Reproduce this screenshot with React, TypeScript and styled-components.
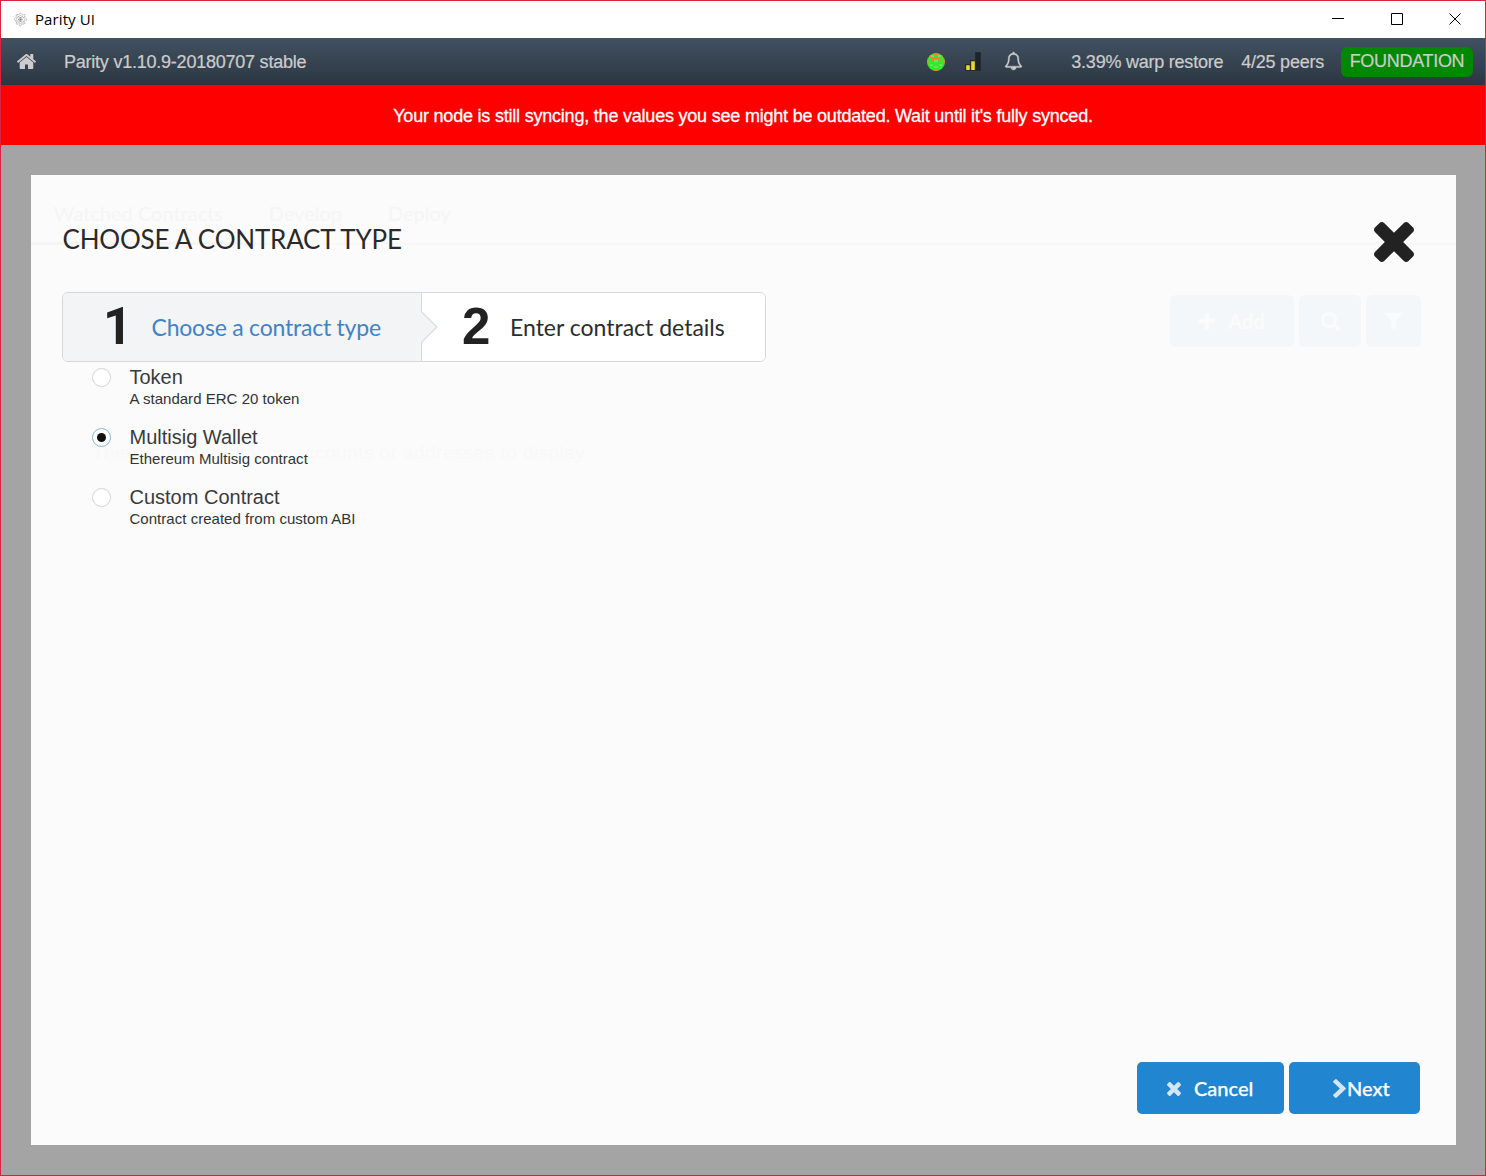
import React from 'react';
import styled, { createGlobalStyle } from 'styled-components';

const SANS = '"Liberation Sans", Arial, sans-serif';
const LATO = 'Lato, "Liberation Sans", sans-serif';

const GlobalStyle = createGlobalStyle`
  *, *::before, *::after { box-sizing: border-box; }
  html, body { margin: 0; padding: 0; }
  body { font-family: ${SANS}; color: #222; overflow: hidden; }
`;

const Glyph = styled.svg<{ $w: number; $h: number }>`
  display: block;
  flex: none;
  width: ${p => p.$w}px;
  height: ${p => p.$h}px;
  fill: currentColor;
`;

const ICONS = {
  home: {
    box: '89 253 1614 1283',
    d: 'M1472 992v480q0 26-19 45t-45 19h-384v-384h-256v384h-384q-26 0-45-19t-19-45v-480q0-1 .5-3t.5-3l575-474 575 474q1 2 1 6zm223-69l-62 74q-8 9-21 11h-3q-13 0-21-7l-692-577-692 577q-12 8-24 7-13-2-21-11l-62-74q-8-10-7-23.5t11-21.5l719-599q32-26 76-26t76 26l244 204v-195q0-14 9-23t23-9h192q14 0 23 9t9 23v408l219 182q10 8 11 21.5t-7 23.5z',
  },
  bell: {
    box: '64 0 1664 1792',
    d: 'M912 1696q0-16-16-16-59 0-101.5-42.5t-42.5-101.5q0-16-16-16t-16 16q0 73 51.5 124.5t124.5 51.5q16 0 16-16zm-666-288h1300q-266-300-266-832 0-51-24-105t-69-103-121.5-80.5-169.5-31.5-169.5 31.5-121.5 80.5-69 103-24 105q0 532-266 832zm1482 0q0 52-38 90t-90 38h-448q0 106-75 181t-181 75-181-75-75-181h-448q-52 0-90-38t-38-90q50-42 91-88t85-119.5 74.5-158.5 50-206 19.5-260q0-152 117-282.5t307-158.5q-8-19-8-39 0-40 28-68t68-28 68 28 28 68q0 20-8 39 190 28 307 158.5t117 282.5q0 139 19.5 260t50 206 74.5 158.5 85 119.5 91 88z',
  },
  close: {
    box: '302 366 1188 1188',
    d: 'M1490 1322q0 40-28 68l-136 136q-28 28-68 28t-68-28l-294-294-294 294q-28 28-68 28t-68-28l-136-136q-28-28-28-68t28-68l294-294-294-294q-28-28-28-68t28-68l136-136q28-28 68-28t68 28l294 294 294-294q28-28 68-28t68 28l136 136q28 28 28 68t-28 68l-294 294 294 294q28 28 28 68z',
  },
  chevron: {
    box: '346 26 1036 1612',
    d: 'M1363 877l-742 742q-19 19-45 19t-45-19l-166-166q-19-19-19-45t19-45l531-531-531-531q-19-19-19-45t19-45l166-166q19-19 45-19t45 19l742 742q19 19 19 45t-19 45z',
  },
  plus: {
    box: '192 128 1408 1408',
    d: 'M1600 736v192q0 40-28 68t-68 28h-416v416q0 40-28 68t-68 28h-192q-40 0-68-28t-28-68v-416h-416q-40 0-68-28t-28-68v-192q0-40 28-68t68-28h416v-416q0-40 28-68t68-28h192q40 0 68 28t28 68v416h416q40 0 68 28t28 68z',
  },
  search: {
    box: '64 128 1664 1664',
    d: 'M1216 832q0-185-131.5-316.5t-316.5-131.5-316.5 131.5-131.5 316.5 131.5 316.5 316.5 131.5 316.5-131.5 131.5-316.5zm512 832q0 52-38 90t-90 38q-54 0-90-38l-343-342q-179 124-399 124-143 0-273.5-55.5t-225-150-150-225-55.5-273.5 55.5-273.5 150-225 225-150 273.5-55.5 273.5 55.5 225 150 150 225 55.5 273.5q0 220-124 399l343 343q37 37 37 90z',
  },
  filter: {
    box: '192 256 1408 1408',
    d: 'M1595 295q17 41-14 70l-493 493v742q0 42-39 59-13 5-25 5-27 0-45-19l-256-256q-19-19-19-45v-486l-493-493q-31-29-14-70 17-39 59-39h1280q42 0 59 39z',
  },
};

function Icon({ name, w, h = w }: { name: keyof typeof ICONS; w: number; h?: number }) {
  return (
    <Glyph $w={w} $h={h} viewBox={ICONS[name].box} preserveAspectRatio="none">
      <path d={ICONS[name].d} />
    </Glyph>
  );
}

const Window = styled.div`
  width: 1486px;
  height: 1176px;
  display: flex;
  flex-direction: column;
  border: 1px solid #d9243c;
  background: #a4a4a4;
`;

/* Title bar */
const TitleBar = styled.div`
  flex: none;
  height: 37px;
  display: flex;
  align-items: center;
  padding: 0 23px 1px 12px;
  background: #fff;
`;
const WindowTitle = styled.span`
  flex: 1;
  margin-left: 7px;
  font: 15px/20px "Open Sans", "Noto Sans", sans-serif;
  letter-spacing: 0.1px;
  color: #000;
`;
const Controls = styled.div`
  display: flex;
  align-items: center;
  gap: 46px;
`;

/* Status header */
const Header = styled.header`
  flex: none;
  height: 47px;
  display: flex;
  align-items: center;
  padding: 0 12px 0 16px;
  background: linear-gradient(#415161, #2c3641);
  color: #ccc;
  font-size: 18px;
  -webkit-text-stroke: 0.2px currentColor;
`;
const HeaderText = styled.span<{ $left: number }>`
  margin-left: ${p => p.$left}px;
  padding-top: 2px;
  letter-spacing: -0.23px;
  white-space: nowrap;
`;
const HeaderIcons = styled.div`
  display: flex;
  align-items: center;
  margin-left: auto;
`;
const SignalSlot = styled.span`
  margin: 0 22px 0 20px;
  display: flex;
`;
const BellSlot = styled.span`
  margin-top: -2px;
  svg { stroke: currentColor; stroke-width: 40; overflow: visible; }
`;
const ChainBadge = styled.span`
  width: 132px;
  height: 30px;
  margin: 0 0 0 17px;
  border-radius: 6px;
  background: #008800;
  text-align: center;
  line-height: 29px;
  letter-spacing: -0.3px;
`;

const Warning = styled.div`
  flex: none;
  height: 60px;
  display: flex;
  align-items: center;
  justify-content: center;
  padding-top: 2px;
  background: #f00;
  color: #fff;
  font-size: 18px;
  letter-spacing: -0.21px;
  -webkit-text-stroke: 0.3px currentColor;
`;

/* Modal */
const Stage = styled.main`
  flex: 1;
  display: grid;
  padding: 30px 29px 30px 30px;
`;
const Modal = styled.section`
  display: grid;
  grid-template: 100% / 100%;
  background: #fbfbfb;
`;
const Underlay = styled.div`
  grid-area: 1 / 1;
  display: flex;
  flex-direction: column;
  color: #f5f5f5;
`;
const Tabs = styled.nav`
  height: 70px;
  display: flex;
  border-bottom: 2px solid #f8f8f8;
  font: 20px/26px ${LATO};
`;
const Tab = styled.span<{ $active?: boolean }>`
  height: 70px;
  padding: 25px 23px 0 22.8px;
  border-bottom: ${p => (p.$active ? '3px solid #f5f5f5' : 'none')};
`;
const Tools = styled.div`
  display: flex;
  justify-content: flex-end;
  gap: 5px;
  padding: 50px 35px 0 0;
`;
const FaintButton = styled.div<{ $w: number }>`
  width: ${p => p.$w}px;
  height: 52px;
  display: flex;
  align-items: center;
  justify-content: center;
  gap: 13px;
  border-radius: 6px;
  background: #f3f7fa;
  color: #fbfbfb;
  font: bold 20px ${LATO};
`;
const EmptyNote = styled.p`
  margin: 94px 0 0 61px;
  font-size: 19px;
  line-height: 24px;
  letter-spacing: 0.44px;
  color: #f8f8f8;
`;

const Content = styled.div`
  grid-area: 1 / 1;
  display: flex;
  flex-direction: column;
  padding: 47px 36px 31px 31px;
`;
const ModalHead = styled.div`
  display: flex;
  justify-content: space-between;
  align-items: flex-start;
  height: 70px;
  padding-right: 6px;
`;
const Heading = styled.h1`
  margin: 0 0 0 0.5px;
  font: 400 26px/35px ${LATO};
  letter-spacing: -0.2px;
  text-transform: uppercase;
  color: #2a2a2a;
`;

const Steps = styled.div`
  display: flex;
  width: 704px;
  height: 70px;
  border: 1px solid #d6d7d8;
  border-radius: 6px;
  background: #fff;
  overflow: hidden;
`;
const Step = styled.div<{ $active?: boolean; $w: number; $pad: number }>`
  position: relative;
  width: ${p => p.$w}px;
  display: flex;
  align-items: center;
  padding-left: ${p => p.$pad}px;
  background: ${p => (p.$active ? '#f3f4f5' : '#fff')};
  color: ${p => (p.$active ? '#4183c4' : '#2c2c2c')};
  border-right: ${p => (p.$active ? '1px solid #d6d7d8' : 'none')};
  letter-spacing: ${p => (p.$active ? -0.22 : 0)}px;
  font: 23px/28px ${LATO};
`;
const StepNumber = styled.span<{ $face: string; $gap: number }>`
  width: ${p => p.$gap}px;
  color: #222;
  font: bold 51px/60px ${p => p.$face};
`;
const Arrow = styled.span`
  position: absolute;
  z-index: 1;
  right: -12px;
  top: 23px;
  width: 22px;
  height: 22px;
  background: #f3f4f5;
  border: solid #d6d7d8;
  border-width: 1px 1px 0 0;
  transform: rotate(45deg);
`;

const Options = styled.div`
  flex: 1;
  padding-left: 30px;
`;
const Option = styled.label`
  display: flex;
  height: 60px;
  padding-top: 6px;
`;
const Radio = styled.span<{ $checked?: boolean }>`
  width: 19px;
  height: 19px;
  margin-right: 18.5px;
  display: grid;
  place-items: center;
  border: 1px solid ${p => (p.$checked ? '#85b7d9' : '#d4d4d5')};
  border-radius: 50%;
  background: #fff;
  &::after {
    content: '';
    width: 9px;
    height: 9px;
    border-radius: 50%;
    background: ${p => (p.$checked ? '#111' : 'transparent')};
  }
`;
const OptionText = styled.span`
  display: flex;
  flex-direction: column;
  margin-top: -1px;
`;
const OptionName = styled.span`
  height: 22px;
  font-size: 20px;
  line-height: 20px;
  color: #3a3a3a;
`;
const OptionHint = styled.span`
  font-size: 15px;
  line-height: 20px;
  letter-spacing: 0.03px;
  color: #333;
`;

const Actions = styled.footer`
  display: flex;
  justify-content: flex-end;
  gap: 5px;
`;
const Button = styled.button<{ $w: number; $gap: number; $pad: number }>`
  width: ${p => p.$w}px;
  height: 52px;
  display: flex;
  align-items: center;
  gap: ${p => p.$gap}px;
  padding: 0 0 0 ${p => p.$pad}px;
  border: 0;
  border-radius: 5px;
  background: #2185d0;
  color: #fff;
  font: 500 20px/24px ${LATO};
  -webkit-text-stroke: 0.25px #fff;
  svg { opacity: 0.8; margin-top: 1px; }
`;

const OPTIONS = [
  { name: 'Token', hint: 'A standard ERC 20 token' },
  { name: 'Multisig Wallet', hint: 'Ethereum Multisig contract', checked: true },
  { name: 'Custom Contract', hint: 'Contract created from custom ABI' },
];

function AppMark() {
  return (
    <svg width="15" height="15" viewBox="0 0 15 15" fill="none" stroke="#999" strokeWidth="0.8" strokeDasharray="1.6 .6">
      <path d="M7.5 .8l1.6 2 2.7-.2-.1 2.7 2.3 2.2-2.3 1.8.1 2.7-2.7-.1-1.6 2.3-1.7-2.3-2.6.1.1-2.7L1 7.500l2.300-2.200-.1-2.700 2.600.2z" />
      <path d="M4.500 5l3-1.500L10.500 5l1 2.500-1 2.500-3 1.500-3-1.500-1-2.500z" />
      <path d="M5.500 6h4M5 7.500h5M5.500 9h4M7.500 5v5" stroke="#777" />
    </svg>
  );
}

function Identity() {
  return (
    <svg width="18" height="18" viewBox="0 0 18 18">
      <defs><clipPath id="face"><circle cx="9" cy="9" r="9" /></clipPath></defs>
      <g clipPath="url(#face)">
        <path fill="#30ee26" d="M0 0h18v18H0z" />
        <path fill="#7bdc65" d="M4 2h3v2H4zM11 2h3v2h-3zM7 7h4v2H7zM3 11h2.500v2H3zM12.500 11H15v2h-2.500zM7 13h4v1.500H7z" />
        <path fill="#f58033" d="M6.500 0h5v2h-5zM2 2h2v2H2zM14 2h2v2h-2zM5 4.500h8v2H5zM4.500 6.500h2V9h-2zM11.500 6.500h2V9h-2zM0 7h1.500v3H0zM16.500 7H18v3h-1.500zM6.500 16h5v2h-5z" />
      </g>
    </svg>
  );
}

function Signal() {
  return (
    <svg width="18" height="20" viewBox="0 0 18 20">
      <path fill="#252b31" d="M0 12h5V8h5V0h6v19H0z" />
      <path fill="#ecd92e" d="M1.200 13.200h3.600V18H1.200zM6.200 9.200h3.600V18H6.200z" />
      <path fill="#1c242b" d="M11 1.200h4V18h-4z" />
    </svg>
  );
}

export default function App() {
  return (
    <>
      <GlobalStyle />
      <Window>
        <TitleBar>
          <AppMark />
          <WindowTitle>Parity UI</WindowTitle>
          <Controls>
            <svg width="13" height="13" stroke="#000"><path d="M1 5.5h12" /></svg>
            <svg width="13" height="13" fill="none" stroke="#000"><path d="M1.500 .5h11v11h-11z" /></svg>
            <svg width="13" height="13" stroke="#000"><path d="M.5 .5l11 11M11.500 .5l-11 11" /></svg>
          </Controls>
        </TitleBar>
        <Header>
          <Icon name="home" w={19} h={15} />
          <HeaderText $left={28}>Parity v1.10.9-20180707 stable</HeaderText>
          <HeaderIcons>
            <Identity />
            <SignalSlot><Signal /></SignalSlot>
            <BellSlot><Icon name="bell" w={17} h={18} /></BellSlot>
          </HeaderIcons>
          <HeaderText $left={49}>3.39% warp restore</HeaderText>
          <HeaderText $left={18}>4/25 peers</HeaderText>
          <ChainBadge>FOUNDATION</ChainBadge>
        </Header>
        <Warning>Your node is still syncing, the values you see might be outdated. Wait until it's fully synced.</Warning>
        <Stage>
          <Modal>
            <Underlay>
              <Tabs><Tab $active>Watched Contracts</Tab><Tab>Develop</Tab><Tab>Deploy</Tab></Tabs>
              <Tools>
                <FaintButton $w={124}><Icon name="plus" w={16} />Add</FaintButton>
                <FaintButton $w={62}><Icon name="search" w={19} /></FaintButton>
                <FaintButton $w={55}><Icon name="filter" w={17} /></FaintButton>
              </Tools>
              <EmptyNote>There are currently no accounts or addresses to display.</EmptyNote>
            </Underlay>
            <Content>
              <ModalHead>
                <Heading>Choose a contract type</Heading>
                <Icon name="close" w={40} />
              </ModalHead>
              <Steps>
                <Step $active $w={359} $pad={40}>
                  <StepNumber $face="Roboto, sans-serif" $gap={48.5}>1</StepNumber>Choose a contract type
                  <Arrow />
                </Step>
                <Step $w={343} $pad={40}>
                  <StepNumber $face={SANS} $gap={48}>2</StepNumber>Enter contract details
                </Step>
              </Steps>
              <Options>
                {OPTIONS.map(o => (
                  <Option key={o.name}>
                    <Radio $checked={o.checked} />
                    <OptionText>
                      <OptionName>{o.name}</OptionName>
                      <OptionHint>{o.hint}</OptionHint>
                    </OptionText>
                  </Option>
                ))}
              </Options>
              <Actions>
                <Button $w={147} $gap={13} $pad={30}><Icon name="close" w={14} />Cancel</Button>
                <Button $w={131} $gap={1} $pad={44}><Icon name="chevron" w={13} h={19} />Next</Button>
              </Actions>
            </Content>
          </Modal>
        </Stage>
      </Window>
    </>
  );
}
